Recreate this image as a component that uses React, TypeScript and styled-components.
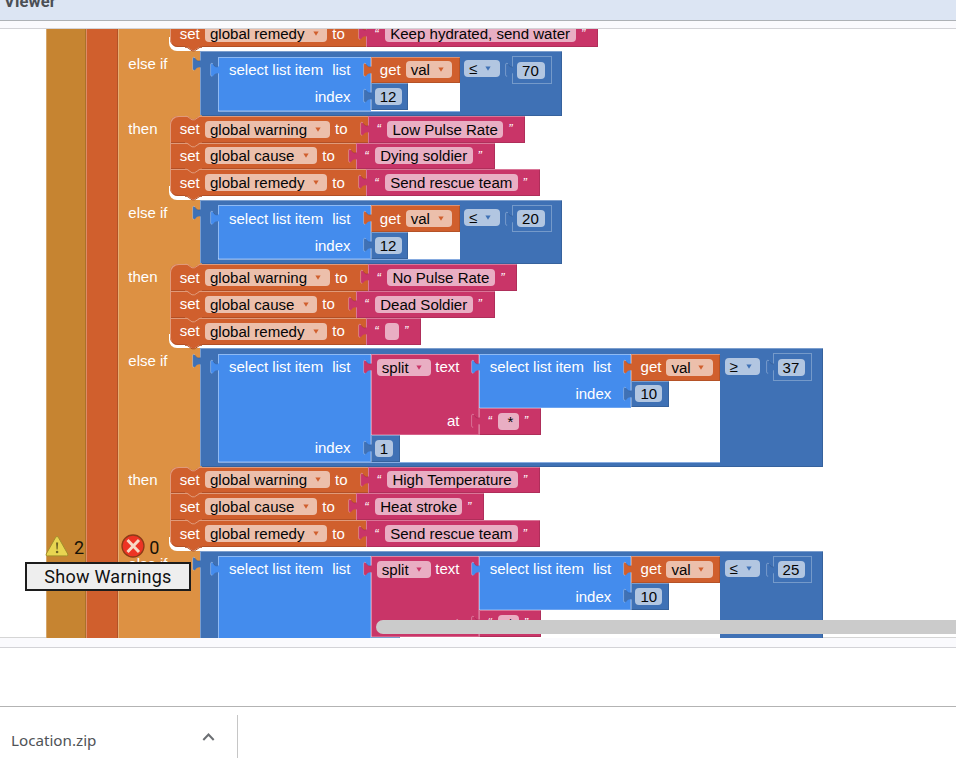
import React from "react";
import styled, { createGlobalStyle } from "styled-components";

const c = {
  math: "#3f71b5",
  list: "#448ced",
  variable: "#d05f2d",
  text: "#c93568",
  control: "#dd9143",
  procedure: "#c68431",
};
type Tone = keyof typeof c;

const Global = createGlobalStyle`
  * { box-sizing: border-box; }
  html, body { margin: 0; height: 758px; overflow: hidden; background: #fff; }
`;

const Page = styled.div`
  display: flex;
  flex-direction: column;
  width: 956px;
  height: 758px;
  overflow: hidden;
  font-family: "Liberation Sans", Arial, sans-serif;
`;
const Header = styled.header`
  height: 21px;
  flex: none;
  overflow: hidden;
  background: #dce5f3;
  border-bottom: 1px solid #adb1b5;
  padding-left: 4px;
  font: bold 16.5px/20px "Roboto", sans-serif;
  color: #4b4f55;
`;
const Title = styled.div`
  margin-top: -8px;
  letter-spacing: 0.15px;
`;
const Strip = styled.div<{ $h: number }>`
  height: ${(p) => p.$h}px;
  flex: none;
  background: #fafafd;
  border-bottom: 1px solid #d3d3d7;
`;
const Workspace = styled.main`
  position: relative;
  display: flex;
  flex: none;
  height: 609px;
  overflow: hidden;
  padding-left: 46px;
  background: linear-gradient(#d5d5d5, #d5d5d5) bottom / 100% 1px no-repeat #fff;
`;
const Rail = styled.div<{ $tone: Tone; $w: number }>`
  flex: none;
  width: ${(p) => p.$w}px;
  height: 609px;
  background: ${(p) => c[p.$tone]};
  box-shadow: inset 1px 0 rgba(255, 255, 255, 0.28), inset -1px 0 rgba(0, 0, 0, 0.14);
`;
const Program = styled.div`
  flex: none;
  width: 800px;
  height: 760px;
  margin-top: -8.8px;
  background: linear-gradient(90deg, #e6ad72 1px, ${c.control} 1px) 0 0 / 82px 100% no-repeat;
`;
const Clause = styled.div`
  display: flex;
  align-items: flex-start;
`;
const Keyword = styled.div<{ $w: number }>`
  flex: none;
  width: ${(p) => p.$w}px;
  padding-left: 10.3px;
  font-size: 15px;
  line-height: 26px;
  color: #fff;
`;
const Stack = styled.div`
  flex: none;
  width: 32px;
  height: 84.1px;
  padding-left: 0.5px;
  background: linear-gradient(#fff, #fff) bottom / 100% 14px no-repeat;
  border-radius: 8px 0 0 8px;
`;
const Statement = styled.div<{ $first?: boolean; $last?: boolean }>`
  position: relative;
  display: flex;
  width: max-content;
  height: 26.8px;
  background: ${c.variable};
  border-radius: ${(p) => (p.$first ? 8 : 0)}px 0 0 ${(p) => (p.$last ? 8 : 0)}px;
  box-shadow: inset 1px 1px #e09a7a, inset 0 -1px #b24f25;
`;
const SetHead = styled.div<{ $w: number }>`
  display: flex;
  align-items: center;
  gap: 5.3px;
  width: ${(p) => p.$w}px;
  padding-left: 9.9px;
`;
const Label = styled.span<{ $gap?: number }>`
  font-size: 15px;
  line-height: 18px;
  white-space: pre;
  color: #fff;
  margin-right: ${(p) => p.$gap ?? 0}px;
`;
const Field = styled.span<{ $tone: Tone; $w: number; $up?: boolean }>`
  display: flex;
  flex: none;
  align-items: center;
  justify-content: space-between;
  width: ${(p) => p.$w}px;
  height: 17px;
  margin-top: ${(p) => (p.$up ? -2 : 0)}px;
  padding: 0 5px;
  border-radius: 4px;
  background: color-mix(in srgb, ${(p) => c[p.$tone]} 40%, white);
  font-size: 15.05px;
  line-height: 17px;
  white-space: pre;
  color: #050505;
`;
const Block = styled.div<{ $tone: Tone; $w: number; $h?: number }>`
  position: relative;
  display: flex;
  flex: none;
  align-items: center;
  width: ${(p) => p.$w}px;
  height: ${(p) => p.$h ?? 26.8}px;
  background: ${(p) => c[p.$tone]};
  box-shadow: inset 1px 1px rgba(255, 255, 255, 0.32), inset -1px -1px rgba(0, 0, 0, 0.13);
`;
const StringBlock = styled(Block)`
  justify-content: space-between;
  padding: 0 11px 0 8.7px;
`;
const NumberBlock = styled(Block)`
  padding-left: 4.2px;
`;
const GetBlock = styled(Block)`
  gap: 5px;
  padding-left: 9.3px;
`;
const Quote = styled.span`
  width: 6px;
  font-size: 13px;
  font-style: italic;
  line-height: 16px;
  color: #fff;
`;
const CompareBlock = styled(Block)`
  align-items: flex-start;
  padding: 5.4px 0 0 18px;
`;
const SelectShell = styled.div<{ $w: number; $h: number; $nested?: boolean }>`
  position: relative;
  display: flex;
  flex: none;
  width: ${(p) => p.$w}px;
  height: ${(p) => p.$h}px;
  background: #fff;
  box-shadow: ${(p) => (p.$nested ? "none" : "0 1px #86abe0")};
`;
const Body = styled.div<{ $tone: Tone; $w: number }>`
  display: flex;
  flex: none;
  flex-direction: column;
  justify-content: space-between;
  width: ${(p) => p.$w}px;
  background: ${(p) => c[p.$tone]};
  box-shadow: inset 1px 1px rgba(255, 255, 255, 0.4), inset -1px -1px rgba(255, 255, 255, 0.22);
`;
const Line = styled.div`
  display: flex;
  align-items: center;
  justify-content: flex-end;
  height: 26.8px;
  padding-right: 20px;
`;
const SplitLine = styled(Line)`
  gap: 4.5px;
  padding-right: 19.3px;
`;
const Args = styled.div`
  display: flex;
  flex-direction: column;
`;
const SplitRow = styled.div`
  position: relative;
  display: flex;
  height: 81px;
`;
const Operator = styled.div`
  display: flex;
  align-items: center;
  height: 26.8px;
  margin-left: 4.6px;
  gap: 12.8px;
`;
const Outlined = styled.div`
  position: relative;
  display: flex;
  align-items: center;
  width: 39.5px;
  height: 27.5px;
  padding-left: 3.7px;
  border: 1px solid #759aca;
`;
const TabSvg = styled.svg`
  position: absolute;
  left: -8px;
  top: 5px;
  z-index: 1;
  overflow: visible;
`;
const NotchSvg = styled.svg<{ $bottom?: boolean }>`
  position: absolute;
  left: 15px;
  top: ${(p) => (p.$bottom ? "26px" : "-1px")};
  z-index: 2;
`;
const ArrowSvg = styled.svg`
  margin-right: 3.5px;
`;

function Tab({ tone }: { tone: Tone }) {
  return (
    <TabSvg width="9" height="16">
      <path d="M9 4.3C6.5 5.6 4.3 4.4 3 2.2C2 .7 .6 1.2 .6 3V12.6C.6 14.5 2.2 14.9 3.5 13.4C5 11.5 6.5 10.8 9 11.6Z" fill={c[tone]} />
      <path d="M3 2C1.8 .6 .6 1.2 .6 3V12.6C.6 13.8 1.3 14.4 2.2 14.2" fill="none" stroke="#fff" strokeOpacity=".3" />
      <path d="M3 2.2C4.3 4.4 6.5 5.6 8 4.8" fill="none" stroke="#000" strokeOpacity=".12" />
    </TabSvg>
  );
}
function Arrow({ tone }: { tone: Tone }) {
  return (
    <ArrowSvg width="6" height="5">
      <path d="M.4.4H5.6L3 4.8Z" fill={c[tone]} />
    </ArrowSvg>
  );
}
function Notch({ bottom, from = c.variable }: { bottom?: boolean; from?: string }) {
  return (
    <NotchSvg $bottom={bottom} width="17" height="6">
      <path d="M0 0V.8H2L7 4.3H9.5L15 .8H17V0Z" fill={from} />
      <path d="M0 1.3H2L7 4.8H9.5L15 1.3H17" fill="none" stroke={bottom ? "#b24f25" : "#e09a7a"} />
    </NotchSvg>
  );
}
function Str({ value, w, field }: { value: string; w: number; field: number }) {
  return (
    <StringBlock $tone="text" $w={w}>
      <Tab tone="text" />
      <Quote>“</Quote>
      <Field $tone="text" $w={field}>{value}</Field>
      <Quote>”</Quote>
    </StringBlock>
  );
}
const names = {
  warning: { field: 124.7, head: 198 },
  cause: { field: 112, head: 185.8 },
  remedy: { field: 122, head: 195.8 },
};
type Row = [keyof typeof names, string, number];

function Sets({ rows }: { rows: Row[] }) {
  return (
    <Stack>
      {rows.map(([name, value, w], i) => (
        <Statement key={i} $first={i === 0} $last={i === rows.length - 1}>
          <Notch from={i === 0 ? c.control : c.variable} />
          {i === rows.length - 1 && <Notch bottom />}
          <SetHead $w={names[name].head}>
            <Label>set</Label>
            <Field $tone="variable" $w={names[name].field}>
              {"global " + name}
              <Arrow tone="variable" />
            </Field>
            <Label>to</Label>
          </SetHead>
          <Str value={value} w={w} field={w - 41.5} />
        </Statement>
      ))}
    </Stack>
  );
}
function Num({ value }: { value: string }) {
  const wide = value.length > 1;
  return (
    <NumberBlock $tone="math" $w={wide ? 37.5 : 29}>
      <Tab tone="math" />
      <Field $tone="math" $w={wide ? 27 : 18.5}>{value}</Field>
    </NumberBlock>
  );
}
function GetVal() {
  return (
    <GetBlock $tone="variable" $w={89}>
      <Tab tone="variable" />
      <Label>get</Label>
      <Field $tone="variable" $w={46.5}>val<Arrow tone="variable" /></Field>
    </GetBlock>
  );
}
function SelectItem({ w, h, nested, children }: { w: number; h: number; nested?: boolean; children: React.ReactNode }) {
  return (
    <SelectShell $w={w} $h={h} $nested={nested}>
      <Tab tone="list" />
      <Body $tone="list" $w={152.5}>
        <Line><Label $gap={9}>select list item</Label><Label>list</Label></Line>
        <Line><Label>index</Label></Line>
      </Body>
      <Args>{children}</Args>
    </SelectShell>
  );
}
function SplitArg() {
  return (
    <>
      <SplitRow>
        <Tab tone="text" />
        <Body $tone="text" $w={108.3}>
          <SplitLine>
            <Field $tone="text" $w={54}>split<Arrow tone="text" /></Field>
            <Label>text</Label>
          </SplitLine>
          <SplitLine><Label>at</Label></SplitLine>
        </Body>
        <Args>
          <SelectItem w={241} h={54} nested>
            <GetVal />
            <Num value="10" />
          </SelectItem>
          <Str value={" *"} w={62} field={20.5} />
        </Args>
      </SplitRow>
      <Num value="1" />
    </>
  );
}
function Compare({ op, value, split }: { op: string; value: string; split?: boolean }) {
  return (
    <Clause>
      <Keyword $w={82}>else if</Keyword>
      <CompareBlock $tone="math" $w={split ? 622.5 : 362} $h={split ? 118.2 : 64.5}>
        <Tab tone="math" />
        <SelectItem w={split ? 502 : 241.5} h={split ? 107.8 : 54}>
          {split ? <SplitArg /> : <><GetVal /><Num value="12" /></>}
        </SelectItem>
        <Operator>
          <Field $tone="math" $w={35.5} $up>{op}<Arrow tone="math" /></Field>
          <Outlined>
            <Tab tone="math" />
            <Field $tone="math" $w={27.5}>{value}</Field>
          </Outlined>
        </Operator>
      </CompareBlock>
    </Clause>
  );
}
function Then({ rows }: { rows: Row[] }) {
  return (
    <Clause>
      <Keyword $w={51.3}>then</Keyword>
      <Sets rows={rows} />
    </Clause>
  );
}

const FirstClause = styled.div`
  height: 31px;
  display: flex;
  padding-left: 51.3px;
`;
const FirstStack = styled(Stack)`
  height: 31px;
`;
const Indicators = styled.div`
  position: absolute;
  left: 45px;
  top: 503px;
  z-index: 5;
  display: flex;
  align-items: center;
  width: 120px;
  height: 27px;
  font: 18px/27px "Roboto", sans-serif;
  color: #161208;
`;
const Count = styled.span<{ $ml: number; $mr: number }>`
  margin: 3px ${(p) => p.$mr}px 0 ${(p) => p.$ml}px;
`;
const WarningsButton = styled.button`
  position: absolute;
  left: 25px;
  top: 533px;
  z-index: 5;
  width: 166px;
  height: 29px;
  padding: 0;
  border: 2px solid #1c1c1c;
  background: #eee;
  color: #111;
  font: 18px/24px "Roboto", sans-serif;
  letter-spacing: 0.25px;
`;
const Scrollbar = styled.div`
  position: absolute;
  left: 376px;
  right: 0;
  top: 591px;
  height: 14px;
  z-index: 5;
  border-radius: 7px 0 0 7px;
  background: #cbcbcb;
`;
const Blank = styled.div`
  height: 59px;
  flex: none;
  border-bottom: 1px solid #b3b3b3;
`;
const Downloads = styled.footer`
  display: flex;
  flex: 1;
  padding-top: 8px;
`;
const Download = styled.div`
  display: flex;
  justify-content: space-between;
  width: 238px;
  padding: 0 22px 0 11px;
  border-right: 1px solid #c6c6c6;
  font: 15.2px/50px "Noto Sans", sans-serif;
  color: #505357;
`;
const Chevron = styled.svg`
  margin-top: 17px;
`;

export default function App() {
  return (
    <Page>
      <Global />
      <Header><Title>Viewer</Title></Header>
      <Strip $h={8} />
      <Workspace>
        <Rail $tone="procedure" $w={39.5} />
        <Rail $tone="variable" $w={32.5} />
        <Program>
          <FirstClause>
            <FirstStack>
              <Statement $last>
                <Notch bottom />
                <SetHead $w={195.8}>
                  <Label>set</Label>
                  <Field $tone="variable" $w={122}>global remedy<Arrow tone="variable" /></Field>
                  <Label>to</Label>
                </SetHead>
                <Str value="Keep hydrated, send water" w={232.5} field={191} />
              </Statement>
            </FirstStack>
          </FirstClause>
          <Compare op="≤" value="70" />
          <Then rows={[["warning", "Low Pulse Rate", 157.5], ["cause", "Dying soldier", 139], ["remedy", "Send rescue team", 174]]} />
          <Compare op="≤" value="20" />
          <Then rows={[["warning", "No Pulse Rate", 149.5], ["cause", "Dead Soldier", 139], ["remedy", "", 55.5]]} />
          <Compare op="≥" value="37" split />
          <Then rows={[["warning", "High Temperature", 172], ["cause", "Heat stroke", 128.5], ["remedy", "Send rescue team", 174]]} />
          <Compare op="≤" value="25" split />
        </Program>
        <Indicators>
          <svg width="24" height="24">
            <path d="M12 2.5Q13 2.5 13.6 3.8L22.8 20Q23.4 21.9 21.8 21.9H2.3Q.6 21.9 1.2 20L10.4 3.8Q11 2.5 12 2.5Z" fill="#e8d551" stroke="#a28f2c" />
            <path d="M11 8.5H13.2L12.6 15.5H11.6Z" fill="#6f6323" />
            <circle cx="12.1" cy="18" r="1.3" fill="#6f6323" />
          </svg>
          <Count $ml={5} $mr={37}>2</Count>
          <svg width="24" height="24">
            <circle cx="12" cy="12" r="11" fill="#ed3424" stroke="#8d3b17" strokeWidth="1.3" />
            <path d="M6.5 6L18 18M18 6L6.5 18" stroke="#f8d9c4" strokeWidth="3" />
          </svg>
          <Count $ml={4} $mr={0}>0</Count>
        </Indicators>
        <WarningsButton>Show Warnings</WarningsButton>
        <Scrollbar />
      </Workspace>
      <Strip $h={10} />
      <Blank />
      <Downloads>
        <Download>
          Location.zip
          <Chevron width="13" height="10">
            <path d="M1.3 8L6.5 2.5L11.7 8" fill="none" stroke="#6c6f73" strokeWidth="2" />
          </Chevron>
        </Download>
      </Downloads>
    </Page>
  );
}
